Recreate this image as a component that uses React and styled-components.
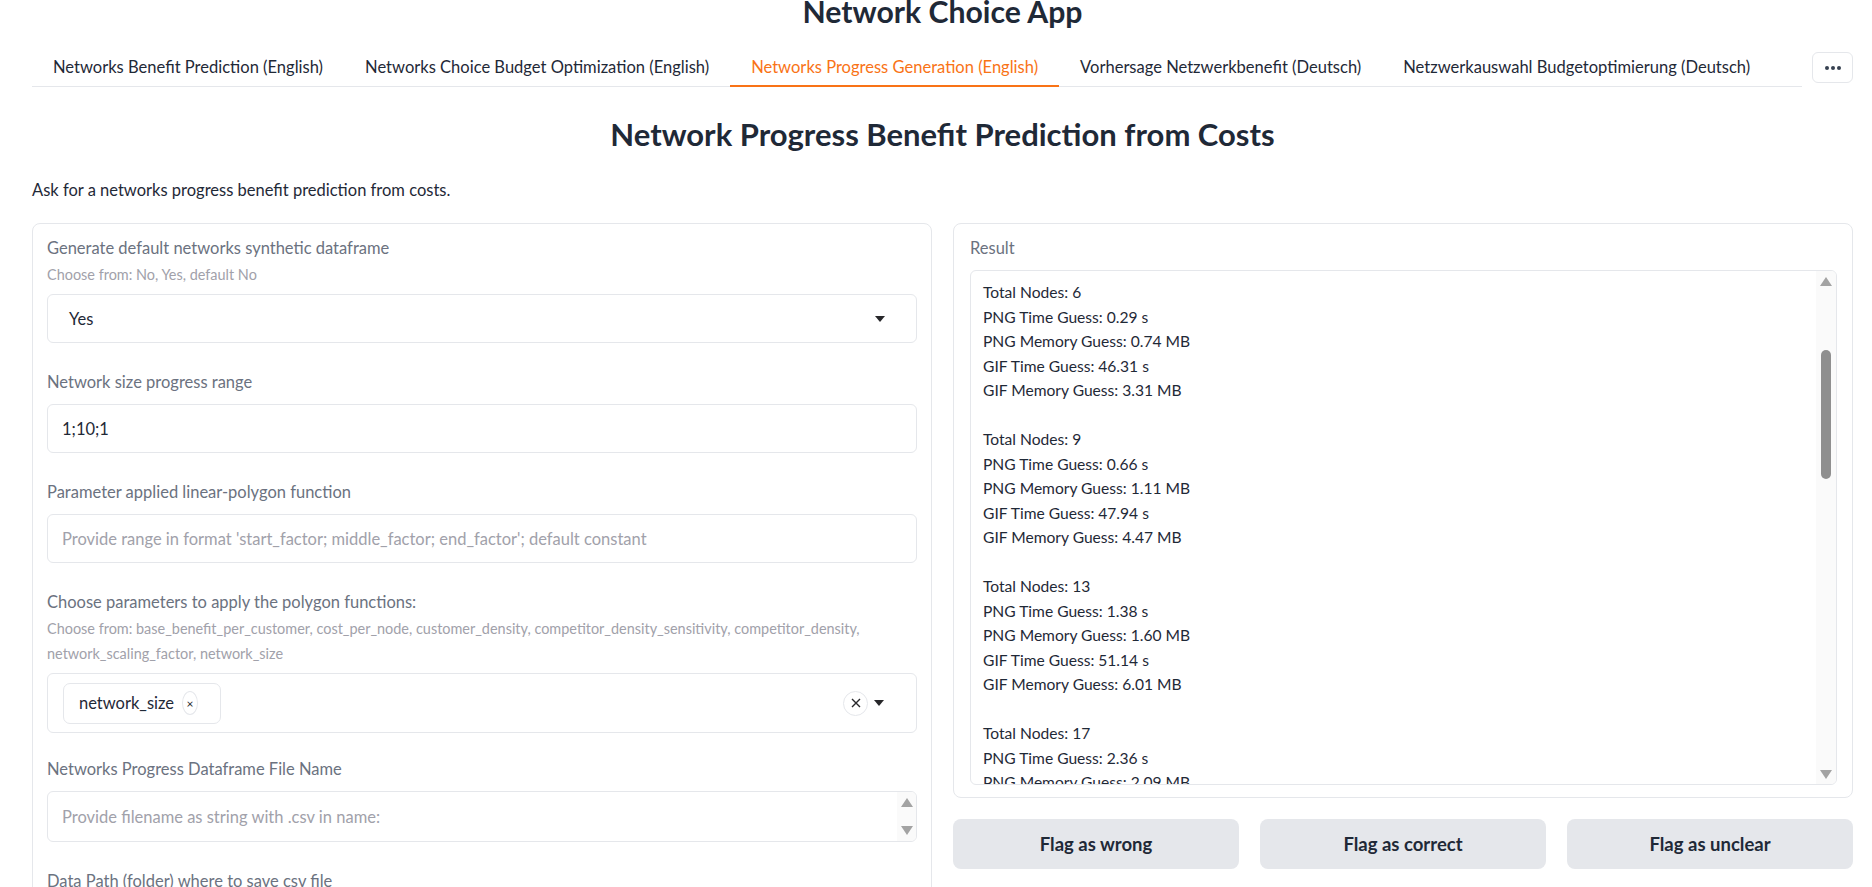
import styled, { createGlobalStyle } from "styled-components";

const GlobalStyle = createGlobalStyle`
  html, body {
    margin: 0;
    padding: 0;
    background: #ffffff;
    overflow: hidden;
  }
  body {
    font-family: "Lato", "Noto Sans", sans-serif;
    color: #1f2937;
  }
`;

const tabs = [
  "Networks Benefit Prediction (English)",
  "Networks Choice Budget Optimization (English)",
  "Networks Progress Generation (English)",
  "Vorhersage Netzwerkbenefit (Deutsch)",
  "Netzwerkauswahl Budgetoptimierung (Deutsch)",
];

const results = [
  { nodes: 6, pngTime: "0.29", pngMem: "0.74", gifTime: "46.31", gifMem: "3.31" },
  { nodes: 9, pngTime: "0.66", pngMem: "1.11", gifTime: "47.94", gifMem: "4.47" },
  { nodes: 13, pngTime: "1.38", pngMem: "1.60", gifTime: "51.14", gifMem: "6.01" },
  { nodes: 17, pngTime: "2.36", pngMem: "2.09", gifTime: "55.02", gifMem: "7.62" },
];

const App = () => {
  return (
    <Page>
      <GlobalStyle />
      <AppTitle>Network Choice App</AppTitle>

      <TabRow>
        <TabList>
          {tabs.map((t, i) => (
            <Tab key={t} active={i === 2}>
              {t}
            </Tab>
          ))}
        </TabList>
        <MoreButton>
          <Dot />
          <Dot />
          <Dot />
        </MoreButton>
      </TabRow>

      <Heading>Network Progress Benefit Prediction from Costs</Heading>
      <Description>Ask for a networks progress benefit prediction from costs.</Description>

      <Columns>
        <Panel>
          <Field>
            <Label hasInfo>Generate default networks synthetic dataframe</Label>
            <Info>Choose from: No, Yes, default No</Info>
            <InputBox pad="21px">
              <Value>Yes</Value>
              <Caret />
            </InputBox>
          </Field>

          <Field>
            <Label>Network size progress range</Label>
            <InputBox>
              <Value>1;10;1</Value>
            </InputBox>
          </Field>

          <Field>
            <Label>Parameter applied linear-polygon function</Label>
            <InputBox>
              <Placeholder>
                Provide range in format 'start_factor; middle_factor; end_factor'; default constant
              </Placeholder>
            </InputBox>
          </Field>

          <Field>
            <Label hasInfo>Choose parameters to apply the polygon functions:</Label>
            <Info>
              Choose from: base_benefit_per_customer, cost_per_node, customer_density,
              competitor_density_sensitivity, competitor_density, network_scaling_factor,
              network_size
            </Info>
            <MultiBox>
              <Chip>
                network_size
                <ChipRemove>×</ChipRemove>
              </Chip>
              <MultiControls>
                <ClearButton>
                  <svg width="12" height="12" viewBox="0 0 12 12">
                    <path d="M2 2 L10 10 M10 2 L2 10" stroke="#27272a" strokeWidth="1.4" />
                  </svg>
                </ClearButton>
                <Caret />
              </MultiControls>
            </MultiBox>
          </Field>

          <Field tight>
            <Label>Networks Progress Dataframe File Name</Label>
            <AreaBox>
              <Placeholder>Provide filename as string with .csv in name:</Placeholder>
              <Spinner>
                <Arrow dir="up" />
                <Arrow dir="down" />
              </Spinner>
            </AreaBox>
          </Field>

          <Field>
            <Label>Data Path (folder) where to save csv file</Label>
            <AreaBox>
              <Placeholder>Provide path to folder where the csv file is saved:</Placeholder>
              <Spinner>
                <Arrow dir="up" />
                <Arrow dir="down" />
              </Spinner>
            </AreaBox>
          </Field>
        </Panel>

        <RightColumn>
          <ResultPanel>
            <Label>Result</Label>
            <ResultBox>
              <ResultText>
                {results.map((r) => (
                  <ResultGroup key={r.nodes}>
                    <Line>Total Nodes: {r.nodes}</Line>
                    <Line>PNG Time Guess: {r.pngTime} s</Line>
                    <Line>PNG Memory Guess: {r.pngMem} MB</Line>
                    <Line>GIF Time Guess: {r.gifTime} s</Line>
                    <Line>GIF Memory Guess: {r.gifMem} MB</Line>
                  </ResultGroup>
                ))}
              </ResultText>
              <ScrollTrack>
                <Arrow dir="up" />
                <ThumbArea>
                  <Thumb />
                </ThumbArea>
                <Arrow dir="down" />
              </ScrollTrack>
            </ResultBox>
          </ResultPanel>

          <ButtonRow>
            <FlagButton>Flag as wrong</FlagButton>
            <FlagButton>Flag as correct</FlagButton>
            <FlagButton>Flag as unclear</FlagButton>
          </ButtonRow>
        </RightColumn>
      </Columns>
    </Page>
  );
};

const Page = styled.div`
  width: 1821px;
  margin: -9px 0 0 32px;
  display: flex;
  flex-direction: column;
`;

const AppTitle = styled.h1`
  margin: 0;
  text-align: center;
  font-size: 30.2px;
  line-height: 40px;
  font-weight: 700;
  color: #1f2937;
`;

const TabRow = styled.div`
  margin-top: 16px;
  display: flex;
  align-items: flex-start;
  gap: 10px;
`;

const TabList = styled.div`
  flex: 1;
  display: flex;
  border-bottom: 1px solid #e5e7eb;
  height: 39px;
`;

const Tab = styled.div`
  padding: 10px 21px 7px;
  font-size: 16.55px;
  line-height: 20px;
  white-space: nowrap;
  color: ${(p) => (p.active ? "#f97316" : "#1f2937")};
  border-bottom: 2px solid ${(p) => (p.active ? "#f97316" : "transparent")};
  margin-bottom: -1px;
`;

const MoreButton = styled.div`
  margin-top: 5px;
  width: 41px;
  height: 31px;
  box-sizing: border-box;
  border: 1px solid #e5e7eb;
  border-radius: 6px;
  display: flex;
  align-items: center;
  justify-content: center;
  gap: 2px;
`;

const Dot = styled.span`
  width: 4px;
  height: 4px;
  border-radius: 50%;
  background: #374151;
`;

const Heading = styled.h2`
  margin: 27px 0 0;
  text-align: center;
  font-size: 31px;
  line-height: 40px;
  font-weight: 700;
  color: #1f2937;
`;

const Description = styled.p`
  margin: 24px 0 0;
  font-size: 16.5px;
  line-height: 24px;
  color: #1f2937;
`;

const Columns = styled.div`
  margin-top: 21px;
  display: grid;
  grid-template-columns: 1fr 1fr;
  gap: 21px;
  align-items: start;
`;

const Panel = styled.div`
  box-sizing: border-box;
  border: 1px solid #e5e7eb;
  border-radius: 8px;
  padding: 14px 14px 20px;
  display: flex;
  flex-direction: column;
  gap: 29px;
  background: #fff;
`;

const Field = styled.div`
  display: flex;
  flex-direction: column;
  margin-top: ${(p) => (p.tight ? "-3px" : "0")};
`;

const Label = styled.div`
  font-size: 16.5px;
  line-height: 20px;
  color: #6b7280;
  margin-bottom: ${(p) => (p.hasInfo ? "4px" : "12px")};
`;

const Info = styled.div`
  font-size: 14.45px;
  line-height: 25px;
  color: #a1a1aa;
  margin-bottom: 7px;
`;

const InputBox = styled.div`
  box-sizing: border-box;
  height: 49px;
  border: 1px solid #e5e7eb;
  border-radius: 6px;
  padding: 0 31px 0 ${(p) => p.pad || "14px"};
  display: flex;
  align-items: center;
  justify-content: space-between;
  background: #fff;
`;

const Value = styled.span`
  font-size: 16.5px;
  color: #1f2937;
`;

const Placeholder = styled.span`
  font-size: 16.5px;
  color: #a1a1aa;
  white-space: nowrap;
`;

const Caret = styled.span`
  width: 0;
  height: 0;
  border-left: 5px solid transparent;
  border-right: 5px solid transparent;
  border-top: 6px solid #27272a;
`;

const MultiBox = styled.div`
  box-sizing: border-box;
  height: 60px;
  border: 1px solid #e5e7eb;
  border-radius: 6px;
  padding: 0 32px 0 15px;
  display: flex;
  align-items: center;
  justify-content: space-between;
`;

const Chip = styled.div`
  box-sizing: border-box;
  height: 41px;
  width: 158px;
  border: 1px solid #e5e7eb;
  border-radius: 7px;
  padding: 0 0 0 15px;
  display: flex;
  align-items: center;
  gap: 8px;
  font-size: 16.5px;
  color: #1f2937;
`;

const ChipRemove = styled.span`
  width: 14px;
  height: 22px;
  border-radius: 50%;
  border: 1px solid #e5e7eb;
  display: flex;
  align-items: center;
  justify-content: center;
  font-size: 12px;
  color: #27272a;
`;

const MultiControls = styled.div`
  display: flex;
  align-items: center;
  gap: 6px;
`;

const ClearButton = styled.span`
  box-sizing: border-box;
  width: 25px;
  height: 25px;
  border-radius: 50%;
  border: 1px solid #e5e7eb;
  display: flex;
  align-items: center;
  justify-content: center;
`;

const AreaBox = styled.div`
  box-sizing: border-box;
  height: 51px;
  border: 1px solid #e5e7eb;
  border-radius: 6px;
  padding-left: 14px;
  display: flex;
  align-items: center;
  justify-content: space-between;
  overflow: hidden;
`;

const Spinner = styled.div`
  align-self: stretch;
  width: 19px;
  background: #fafafa;
  display: flex;
  flex-direction: column;
  justify-content: space-between;
  align-items: center;
  padding: 6px 0;
`;

const Arrow = styled.span`
  width: 0;
  height: 0;
  border-left: 6px solid transparent;
  border-right: 6px solid transparent;
  ${(p) =>
    p.dir === "up"
      ? "border-bottom: 9px solid #a3a3a3;"
      : "border-top: 9px solid #a3a3a3;"}
`;

const RightColumn = styled.div`
  display: flex;
  flex-direction: column;
  gap: 21px;
`;

const ResultPanel = styled.div`
  box-sizing: border-box;
  height: 575px;
  border: 1px solid #e5e7eb;
  border-radius: 8px;
  padding: 14px 15px 12px 16px;
  display: flex;
  flex-direction: column;
  background: #fff;
`;

const ResultBox = styled.div`
  flex: 1;
  min-height: 0;
  border: 1px solid #e5e7eb;
  border-radius: 6px;
  display: flex;
  overflow: hidden;
`;

const ResultText = styled.div`
  flex: 1;
  padding: 9px 12px;
  overflow: hidden;
`;

const ResultGroup = styled.div`
  margin-bottom: 24.5px;
`;

const Line = styled.div`
  font-size: 15.6px;
  line-height: 24.5px;
  color: #1f2937;
`;

const ScrollTrack = styled.div`
  width: 20px;
  background: #fafafa;
  display: flex;
  flex-direction: column;
  align-items: center;
  padding: 6px 0 5px;
`;

const ThumbArea = styled.div`
  flex: 1;
  width: 100%;
  display: flex;
  justify-content: center;
`;

const Thumb = styled.div`
  margin-top: 64px;
  width: 10px;
  height: 129px;
  border-radius: 5px;
  background: #8f8f8f;
`;

const ButtonRow = styled.div`
  display: grid;
  grid-template-columns: 1fr 1fr 1fr;
  gap: 21px;
`;

const FlagButton = styled.button`
  height: 50px;
  border: none;
  border-radius: 8px;
  background: #e5e7eb;
  font-family: "Lato", "Noto Sans", sans-serif;
  font-size: 18.5px;
  font-weight: 700;
  color: #1f2937;
  cursor: pointer;
`;

export default App;
